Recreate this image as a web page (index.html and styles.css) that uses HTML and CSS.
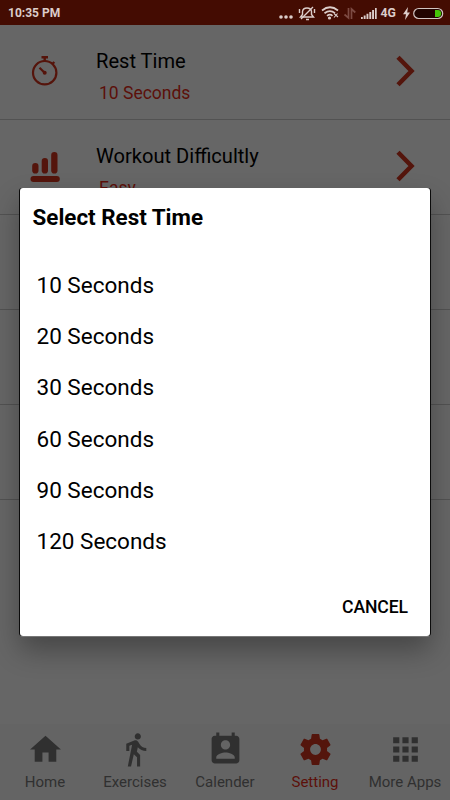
FILE: index.html
```html
<!DOCTYPE html>
<html lang="en">
<head>
<meta charset="utf-8">
<title>Settings</title>
<link rel="stylesheet" href="styles.css">
</head>
<body>
<div class="screen">
  <header class="status">
    <span class="clock">10:35 PM</span>
    <svg class="status-icons" width="126" height="24" viewBox="0 0 126 24" fill="#dccdca">
      <circle cx="3" cy="16" r="1.8"/><circle cx="8" cy="16" r="1.8"/><circle cx="13" cy="16" r="1.8"/>
      <g fill="none" stroke="#dccdca" stroke-width="1.4">
        <path d="M22.500 16H35.500L33.500 13.500V10.500Q33 7 29 7T24.500 10.500V13.500Z"/>
        <path d="M23 18L35 6M21.500 8V12M36.500 8V12M28 18.500H31"/>
        <path d="M44 9.500Q52 3 60 9.500M46.500 12.200Q52 8 57 12.200M49 14.800Q52 12.500 54.500 14.800" stroke-width="1.7"/>
        <path d="M56 16.500L59.500 12.500M56 12.500L60 16" stroke-width="1.1"/>
      </g>
      <circle cx="51.500" cy="17" r="1.6"/>
      <path d="M70.500 7V17L66.500 13.500M73.500 18V8L77.300 11.500" fill="none" stroke="#7c4a42" stroke-width="1.700"/>
      <path d="M83 16h1.800v2H83zM85.700 14.500h1.900V18h-1.900zM88.500 12.800h1.900V18h-1.900zM91.300 11h1.900v7h-1.900zM94.100 9H96v9h-1.900zM97 7h1.700v11H97z"/>
    </svg>
    <span class="network">4G</span>
    <svg class="power" width="42" height="24" viewBox="0 0 42 24">
      <path d="M5 6L0 13.200H3L2 19L7 11.500H4.200Z" fill="#dccdca"/>
      <rect x="10.700" y="7.500" width="29" height="10" rx="5" fill="#220400" stroke="#d2c5c2" stroke-width="1.200"/>
      <path d="M32 9H35Q38 9.300 38.200 12.500Q38 15.700 35 16H32Z" fill="#45c708"/>
    </svg>
  </header>
  <main class="list">
    <section class="row">
      <svg class="lead" width="30" height="32" viewBox="0 0 30 32" fill="none" stroke="#55140b">
        <circle cx="14.700" cy="17.700" r="11.700" stroke-width="2.200"/>
        <path d="M11.500 2.300H18M14.700 2.300V6M22.300 9L24.300 7" stroke-width="2.400"/>
        <path d="M9.500 12.800L14.700 17.700" stroke-width="2.200"/>
        <circle cx="14.700" cy="17.700" r="2" fill="#55140b" stroke="none"/>
      </svg>
      <div class="copy"><div class="name">Rest Time</div><div class="value">10 Seconds</div></div>
      <svg class="chevron" width="20" height="32" viewBox="0 0 20 32"><path d="M2 2.200L15.500 16L2 29.800" fill="none" stroke="#54150c" stroke-width="4.500"/></svg>
    </section>
    <section class="row">
      <svg class="lead" width="30" height="32" viewBox="0 0 30 32" fill="#54150c">
        <rect x="2.200" y="13" width="6.300" height="10.500" rx="3.100"/><rect x="11.700" y="8" width="6.300" height="15.500" rx="3.100"/><rect x="21.200" y="2" width="6.300" height="21.500" rx="3.100"/><rect x=".5" y="26" width="29.300" height="6" rx="3"/>
      </svg>
      <div class="copy"><div class="name">Workout Difficultly</div><div class="value">Easy</div></div>
      <svg class="chevron" width="20" height="32" viewBox="0 0 20 32"><path d="M2 2.200L15.500 16L2 29.800" fill="none" stroke="#54150c" stroke-width="4.500"/></svg>
    </section>
    <section class="row"></section>
    <section class="row"></section>
    <section class="row"></section>
  </main>
  <nav class="tabs">
    <div class="tab"><svg viewBox="0 0 24 24"><path d="M10 20v-6h4v6h5v-8h3L12 3 2 12h3v8z"/></svg><span>Home</span></div>
    <div class="tab"><svg viewBox="0 0 24 24"><path d="M13.500 5.500c1.100 0 2-.9 2-2s-.9-2-2-2-2 .9-2 2 .9 2 2 2zM9.800 8.900L7 23h2.100l1.800-8 2.100 2v6h2v-7.500l-2.100-2 .6-3C14.800 12 16.800 13 19 13v-2c-1.900 0-3.500-1-4.300-2.400l-1-1.600c-.4-.6-1-1-1.700-1-.3 0-.5.1-.8.1L6 8.300V13h2V9.600l1.800-.7"/></svg><span>Exercises</span></div>
    <div class="tab"><svg viewBox="0 0 24 24"><path d="M19 3h-1V1h-2v2H8V1H6v2H5c-1.110 0-2 .9-2 2v14c0 1.100.89 2 2 2h14c1.100 0 2-.9 2-2V5c0-1.100-.9-2-2-2zm-7 3c1.660 0 3 1.340 3 3s-1.340 3-3 3-3-1.340-3-3 1.340-3 3-3zm6 12H6v-1c0-2 4-3.100 6-3.100s6 1.100 6 3.100v1z"/></svg><span>Calender</span></div>
    <div class="tab active"><svg viewBox="0 0 24 24"><path d="M19.430 12.980c.04-.32.07-.64.07-.98s-.03-.66-.07-.98l2.110-1.650c.19-.15.24-.42.12-.64l-2-3.460c-.12-.22-.39-.3-.61-.22l-2.490 1c-.52-.4-1.080-.73-1.690-.98l-.38-2.650C14.460 2.180 14.250 2 14 2h-4c-.25 0-.46.18-.49.42l-.38 2.650c-.61.25-1.170.59-1.690.98l-2.490-1c-.23-.09-.49 0-.61.22l-2 3.460c-.13.22-.07.49.12.64l2.110 1.650c-.04.32-.07.65-.07.98s.03.66.07.98l-2.110 1.650c-.19.15-.24.42-.12.64l2 3.460c.12.22.39.3.61.22l2.490-1c.52.4 1.080.73 1.690.98l.38 2.650c.03.24.24.42.49.42h4c.25 0 .46-.18.49-.42l.38-2.650c.61-.25 1.170-.59 1.690-.98l2.490 1c.23.09.49 0 .61-.22l2-3.460c.12-.22.07-.49-.12-.64l-2.110-1.650zM12 15.500c-1.930 0-3.500-1.570-3.500-3.500s1.570-3.500 3.500-3.500 3.500 1.570 3.500 3.500-1.570 3.500-3.500 3.500z"/></svg><span>Setting</span></div>
    <div class="tab"><svg viewBox="0 0 24 24"><path d="M4 8h4V4H4v4zm6 12h4v-4h-4v4zm-6 0h4v-4H4v4zm0-6h4v-4H4v4zm6 0h4v-4h-4v4zm6-10v4h4V4h-4zm-6 4h4V4h-4v4zm6 6h4v-4h-4v4zm0 6h4v-4h-4v4z"/></svg><span>More Apps</span></div>
  </nav>
  <div class="dialog" role="dialog">
    <h1 class="title">Select Rest Time</h1>
    <ul class="options">
      <li>10 Seconds</li><li>20 Seconds</li><li>30 Seconds</li><li>60 Seconds</li><li>90 Seconds</li><li>120 Seconds</li>
    </ul>
    <div class="actions"><span class="cancel">CANCEL</span></div>
  </div>
</div>
</body>
</html>
```
FILE: styles.css
```css
* { box-sizing: border-box; }
body { margin: 0; font-family: Roboto, "Noto Sans", sans-serif; }
.screen {
  position: relative;
  width: 450px;
  height: 800px;
  overflow: hidden;
  display: flex;
  flex-direction: column;
  background: #666;
}
.status {
  height: 25px;
  flex: none;
  display: flex;
  align-items: center;
  padding: 0 5px 0 8px;
  background: #440c02;
  color: #dccdca;
  font-weight: 700;
}
.clock { font-size: 12px; }
.status-icons { margin-left: auto; margin-right: -23px; flex: none; }
.network { font-size: 12.3px; margin-right: 7px; }
.power { flex: none; }
.list { flex: 1; }
.row {
  height: 95px;
  display: flex;
  align-items: flex-start;
  padding: 0 34px 0 30px;
  border-bottom: 1px solid #525252;
}
.lead { margin-top: 30px; flex: none; }
.copy { flex: 1; padding: 24px 0 0 36px; }
.name { font-size: 20.1px; line-height: 24px; color: #000; }
.value { margin: 10px 0 0 3px; font-size: 17.5px; line-height: 20px; color: #5c100a; }
.chevron { margin-top: 30px; flex: none; }
.tabs {
  height: 76px;
  flex: none;
  display: grid;
  grid-template-columns: repeat(5, 1fr);
  background: #646464;
}
.tab {
  display: flex;
  flex-direction: column;
  align-items: center;
  padding-top: 7px;
  color: #303030;
  font-size: 15px;
  line-height: 18px;
  white-space: nowrap;
}
.tab svg { width: 37px; height: 37px; margin-bottom: 5px; fill: #303030; }
.tab.active { color: #5c100a; }
.tab.active svg { fill: #54150c; }
.dialog {
  position: absolute;
  left: 20px;
  top: 188px;
  width: 410px;
  height: 448px;
  display: flex;
  flex-direction: column;
  border-radius: 3px;
  background: #fff;
  color: #000;
  box-shadow: -1px 0 0 #0b0b0b, 1px 0 0 #0b0b0b, 0 1px 0 #777, 0 14px 28px rgba(0, 0, 0, .32);
}
.title { margin: 0; padding: 15px 12.5px 0; font-size: 22.4px; line-height: 28px; font-weight: 700; }
.options { margin: 29px 0 0; padding: 0 16.5px; list-style: none; font-size: 22.5px; line-height: 51.2px; }
.actions { margin-top: auto; display: flex; justify-content: flex-end; padding: 0 22px 19px; }
.cancel { font-size: 17.6px; line-height: 20px; font-weight: 500; letter-spacing: -.1px; }
```
